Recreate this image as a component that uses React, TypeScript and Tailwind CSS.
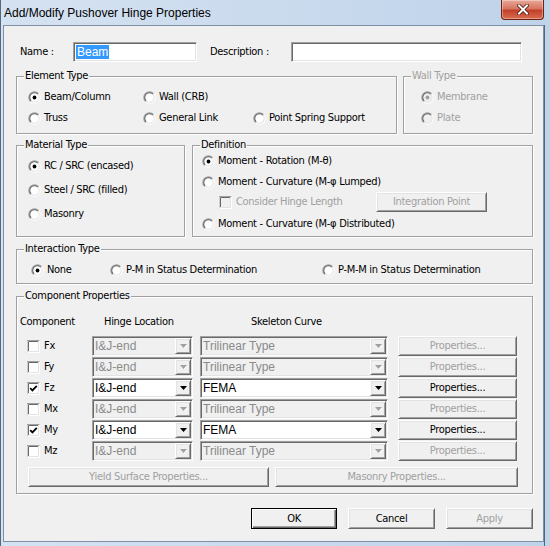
import React from 'react';

const raised =
  'border border-t-white border-l-white border-r-[#696969] border-b-[#696969] shadow-[inset_1px_1px_0_#e3e3e3,inset_-1px_-1px_0_#a0a0a0] bg-[#f0f0f0]';
const sunken =
  'border border-t-[#a0a0a0] border-l-[#a0a0a0] border-r-white border-b-white shadow-[inset_1px_1px_0_#696969,inset_-1px_-1px_0_#e3e3e3]';

function Radio({ checked = false, disabled = false }: { checked?: boolean; disabled?: boolean }) {
  return (
    <svg width="13" height="13" viewBox="0 0 13 13" className="shrink-0">
      <defs>
        <linearGradient id="radOuter" x1="0" y1="0" x2="1" y2="1">
          <stop offset="0.45" stopColor="#a0a0a0" />
          <stop offset="0.55" stopColor="#ffffff" />
        </linearGradient>
        <linearGradient id="radInner" x1="0" y1="0" x2="1" y2="1">
          <stop offset="0.45" stopColor="#696969" />
          <stop offset="0.55" stopColor="#e3e3e3" />
        </linearGradient>
      </defs>
      <circle cx="6.5" cy="6.5" r="6.2" fill="url(#radOuter)" />
      <circle cx="6.5" cy="6.5" r="5.2" fill="url(#radInner)" />
      <circle cx="6.5" cy="6.5" r="4.2" fill={disabled ? '#f0f0f0' : '#ffffff'} />
      {checked && <circle cx="6.5" cy="6.5" r="1.9" fill={disabled ? '#a0a0a0' : '#000000'} />}
    </svg>
  );
}

function Check({ checked = false, disabled = false }: { checked?: boolean; disabled?: boolean }) {
  return (
    <svg width="13" height="13" viewBox="0 0 13 13" className="shrink-0">
      <rect x="0" y="0" width="13" height="13" fill="#ffffff" />
      <path d="M0 12.5V0.5H12.5" stroke="#a0a0a0" fill="none" />
      <path d="M1.5 11V1.5H11" stroke="#696969" fill="none" />
      <path d="M1.5 11.5H11.5V1" stroke="#e3e3e3" fill="none" />
      <rect x="2" y="2" width="9" height="9" fill={disabled ? '#f0f0f0' : '#ffffff'} />
      {checked && <path d="M3.2 6.2L5.4 8.4L9.8 3.8" stroke="#000" strokeWidth="1.8" fill="none" />}
    </svg>
  );
}

function RadioItem({ label, checked, disabled, className = '' }: { label: string; checked?: boolean; disabled?: boolean; className?: string }) {
  return (
    <div className={`flex items-center gap-[3px] h-[14px] ${disabled ? 'text-[#a0a0a0]' : 'text-black'} ${className}`}>
      <Radio checked={checked} disabled={disabled} />
      <span className="whitespace-nowrap">{label}</span>
    </div>
  );
}

function Group({ title, disabled, className = '', children }: { title: string; disabled?: boolean; className?: string; children?: React.ReactNode }) {
  return (
    <div className={`relative border border-[#a0a0a0] shadow-[inset_1px_1px_0_#fff,1px_1px_0_#fff] ${className}`}>
      <span className={`absolute -top-[8px] left-[7px] bg-[#f0f0f0] px-[1px] whitespace-nowrap ${disabled ? 'text-[#a0a0a0]' : 'text-black'}`}>
        {title}
      </span>
      {children}
    </div>
  );
}

function Button({ label, disabled, className = '', isDefault }: { label: string; disabled?: boolean; className?: string; isDefault?: boolean }) {
  const frame = isDefault
    ? 'border border-black shadow-[inset_1px_1px_0_#fff,inset_-1px_-1px_0_#696969,inset_-2px_-2px_0_#a0a0a0] bg-[#f0f0f0]'
    : raised;
  return (
    <div className={`flex items-center justify-center ${frame} ${disabled ? 'text-[#a0a0a0]' : 'text-black'} ${className}`}>
      <span className="whitespace-nowrap">{label}</span>
    </div>
  );
}

function Arrow({ disabled }: { disabled?: boolean }) {
  return (
    <svg width="7" height="4" viewBox="0 0 7 4">
      {disabled && <path d="M1 1H8L4.5 4.5Z" fill="#ffffff" />}
      <path d="M0 0H7L3.5 4Z" fill={disabled ? '#a0a0a0' : '#000'} />
    </svg>
  );
}

function Combo({ value, disabled, className = '' }: { value: string; disabled?: boolean; className?: string }) {
  return (
    <div className={`flex h-[20px] p-[1px] ${sunken} ${disabled ? 'bg-[#f0f0f0] text-[#8a8a8a]' : 'bg-white text-black'} ${className}`}>
      <span className="flex-1 pl-[1px] leading-[16px] text-[12px] tracking-normal font-['Liberation_Sans',Arial,sans-serif] whitespace-nowrap overflow-hidden">{value}</span>
      <span className={`w-[16px] h-full flex items-center justify-center ${raised}`}>
        <Arrow disabled={disabled} />
      </span>
    </div>
  );
}

type Row = { name: string; on: boolean };
const rows: Row[] = [
  { name: 'Fx', on: false },
  { name: 'Fy', on: false },
  { name: 'Fz', on: true },
  { name: 'Mx', on: false },
  { name: 'My', on: true },
  { name: 'Mz', on: false },
];

export default function App() {
  return (
    <div className="w-[550px] h-[546px] flex flex-col bg-[linear-gradient(to_right,#d5e2f1,#bfd3ea)] border-l border-[#55687f] font-['DejaVu_Sans_Condensed','Liberation_Sans',sans-serif] text-[11px] leading-[14px] tracking-[-0.3px] overflow-hidden">
      {/* Title bar */}
      <div className="h-[25px] flex items-start justify-between shrink-0">
        <span className="pl-[3px] pt-[6px] text-[12px] leading-[15px] tracking-normal text-black font-['Liberation_Sans',Arial,sans-serif] whitespace-nowrap">
          Add/Modify Pushover Hinge Properties
        </span>
        <div className="mr-[6px] w-[43px] h-[20px] flex items-center justify-center rounded-b-[4px] border border-t-0 border-[#6f2013] bg-[linear-gradient(to_bottom,#e9a899_0%,#d77660_45%,#c2412a_55%,#d86c4e_100%)] shadow-[inset_0_0_0_1px_rgba(255,255,255,0.35)]">
          <svg width="12" height="11" viewBox="0 0 12 11">
            <path d="M2 1.5L10 9.5M10 1.5L2 9.5" stroke="#4a1208" strokeWidth="3.6" strokeLinecap="square" />
            <path d="M2 1.5L10 9.5M10 1.5L2 9.5" stroke="#ffffff" strokeWidth="2" strokeLinecap="square" />
          </svg>
        </div>
      </div>

      <div className="flex flex-1">
        <div className="w-[2px]" />
        {/* Client area */}
        <div className="w-[541px] h-[517px] border border-[#7d90a8] bg-[#f0f0f0] pl-[12px] pr-[10px] pt-[16px]">
          {/* Name row */}
          <div className="flex items-center h-[20px]">
            <span className="w-[57px] pl-[4px] text-black">Name :</span>
            <div className={`w-[124px] h-[20px] bg-white px-[2px] flex items-center ${sunken}`}>
              <span className="bg-[#3399ff] text-white px-[1px] text-[12px] tracking-normal font-['Liberation_Sans',Arial,sans-serif]">Beam</span>
            </div>
            <span className="w-[94px] pl-[13px] text-black">Description :</span>
            <div className={`w-[231px] h-[20px] bg-white ${sunken}`} />
          </div>

          {/* Element / Wall type */}
          <div className="flex gap-[6px] mt-[14px]">
            <Group title="Element Type" className="w-[381px] h-[58px] pl-[11px] pt-[13px]">
              <div className="flex flex-col gap-[7px]">
                <div className="flex">
                  <RadioItem label="Beam/Column" checked className="w-[115px]" />
                  <RadioItem label="Wall (CRB)" />
                </div>
                <div className="flex">
                  <RadioItem label="Truss" className="w-[115px]" />
                  <RadioItem label="General Link" className="w-[110px]" />
                  <RadioItem label="Point Spring Support" />
                </div>
              </div>
            </Group>
            <Group title="Wall Type" disabled className="w-[130px] h-[58px] pl-[17px] pt-[13px]">
              <div className="flex flex-col gap-[7px]">
                <RadioItem label="Membrane" checked disabled />
                <RadioItem label="Plate" disabled />
              </div>
            </Group>
          </div>

          {/* Material / Definition */}
          <div className="flex gap-[7px] mt-[11px]">
            <Group title="Material Type" className="w-[169px] h-[92px] pl-[11px] pt-[13px]">
              <div className="flex flex-col gap-[10px]">
                <RadioItem label="RC / SRC (encased)" checked />
                <RadioItem label="Steel / SRC (filled)" />
                <RadioItem label="Masonry" />
              </div>
            </Group>
            <Group title="Definition" className="w-[341px] h-[92px] pl-[9px] pt-[8px]">
              <div className="flex flex-col">
                <RadioItem label="Moment - Rotation (M-θ)" checked />
                <RadioItem label="Moment - Curvature (M-φ Lumped)" className="mt-[7px]" />
                <div className="flex items-center h-[20px] mt-[3px]">
                  <div className="w-[174px] flex items-center gap-[4px] pl-[17px] text-[#a0a0a0]">
                    <Check disabled />
                    <span className="whitespace-nowrap">Consider Hinge Length</span>
                  </div>
                  <Button label="Integration Point" disabled className="w-[111px] h-[20px]" />
                </div>
                <RadioItem label="Moment - Curvature (M-φ Distributed)" className="mt-[5px]" />
              </div>
            </Group>
          </div>

          {/* Interaction */}
          <Group title="Interaction Type" className="mt-[12px] w-[517px] h-[35px] pl-[14px] pt-[13px]">
            <div className="flex">
              <RadioItem label="None" checked className="w-[79px]" />
              <RadioItem label="P-M in Status Determination" className="w-[212px]" />
              <RadioItem label="P-M-M in Status Determination" />
            </div>
          </Group>

          {/* Component properties */}
          <Group title="Component Properties" className="mt-[12px] w-[517px] h-[198px] pt-[18px]">
            <div className="flex h-[14px] pl-[3px] text-black">
              <span className="w-[84px]">Component</span>
              <span className="w-[147px]">Hinge Location</span>
              <span>Skeleton Curve</span>
            </div>
            <div className="flex flex-col gap-[1px] mt-[7px]">
              {rows.map((r) => (
                <div key={r.name} className="flex items-center h-[20px] pl-[10px]">
                  <div className="w-[65px] flex items-center gap-[4px] text-black">
                    <Check checked={r.on} />
                    <span>{r.name}</span>
                  </div>
                  <Combo value="I&J-end" disabled={!r.on} className="w-[101px]" />
                  <Combo value={r.on ? 'FEMA' : 'Trilinear Type'} disabled={!r.on} className="w-[188px] ml-[7px]" />
                  <Button label="Properties..." disabled={!r.on} className="w-[119px] h-[20px] ml-[10px]" />
                </div>
              ))}
            </div>
            <div className="flex gap-[6px] mt-[6px] pl-[11px]">
              <Button label="Yield Surface Properties..." disabled className="w-[241px] h-[20px]" />
              <Button label="Masonry Properties..." disabled className="w-[243px] h-[20px]" />
            </div>
          </Group>

          {/* Dialog buttons */}
          <div className="flex justify-end mt-[14px]">
            <Button label="OK" isDefault className="w-[86px] h-[21px]" />
            <Button label="Cancel" className="w-[87px] h-[21px] ml-[11px]" />
            <Button label="Apply" disabled className="w-[87px] h-[21px] ml-[11px]" />
          </div>
        </div>
        <div className="w-[6px] border-l border-[#55687f]" />
      </div>
    </div>
  );
}
